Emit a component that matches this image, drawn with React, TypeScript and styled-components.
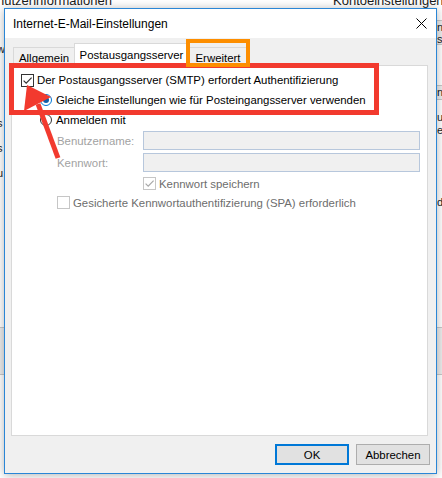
import React from "react";
import styled, { createGlobalStyle } from "styled-components";

const GlobalStyle = createGlobalStyle`
  html, body { margin: 0; padding: 0; background: #ffffff; }
  body { font-family: "Liberation Sans", Arial, sans-serif; }
  * { box-sizing: border-box; }
`;

const FONT = `"Liberation Sans", Arial, sans-serif`;

const Screen = styled.div`
  position: relative;
  width: 442px;
  height: 478px;
  overflow: hidden;
  background: #ffffff;
  font-family: ${FONT};
  padding: 8px 0 0 4px;
`;

/* ---------- window behind the dialog ---------- */
const BackText = styled.span<{ $x: number; $y: number; $size?: number }>`
  position: absolute;
  left: ${(p) => p.$x}px;
  top: ${(p) => p.$y}px;
  font-size: ${(p) => p.$size ?? 11}px;
  line-height: 1;
  color: #1b1b1b;
  white-space: nowrap;
`;

const BackBand = styled.div<{ $x: number; $y: number; $w: number; $h: number }>`
  position: absolute;
  left: ${(p) => p.$x}px;
  top: ${(p) => p.$y}px;
  width: ${(p) => p.$w}px;
  height: ${(p) => p.$h}px;
  background: #ececec;
  border-top: 1px solid #c8c8c8;
  border-bottom: 1px solid #c8c8c8;
`;

/* ---------- dialog ---------- */
const Dialog = styled.div`
  position: relative;
  z-index: 1;
  width: 433px;
  height: 466px;
  border: 1px solid #2a86d6;
  background: #f0f0f0;
  display: flex;
  flex-direction: column;
  box-shadow: 0 1px 9px rgba(0, 0, 0, 0.3);
`;

const TitleBar = styled.div`
  height: 29px;
  flex: none;
  background: #ffffff;
  display: flex;
  align-items: center;
  justify-content: space-between;
  padding: 0 9px 0 8px;
`;

const Title = styled.span`
  font-size: 12px;
  color: #000000;
`;

const Body = styled.div`
  flex: 1;
  display: flex;
  flex-direction: column;
  padding: 5px 0 0 6px;
`;

const TabRow = styled.div`
  display: flex;
  align-items: flex-end;
  height: 22px;
  padding-left: 2px;
  position: relative;
  z-index: 1;
`;

const Tab = styled.div<{ $active?: boolean; $w: number }>`
  width: ${(p) => p.$w}px;
  height: ${(p) => (p.$active ? 23 : 18)}px;
  margin-bottom: ${(p) => (p.$active ? -1 : 0)}px;
  margin-left: -1px;
  background: ${(p) => (p.$active ? "#ffffff" : "#f0f0f0")};
  border: 1px solid #d9d9d9;
  border-bottom: none;
  display: flex;
  align-items: center;
  justify-content: center;
  padding-top: ${(p) => (p.$active ? 0 : 2)}px;
  font-size: 11.4px;
  color: #000000;
  &:first-child { margin-left: 0; }
`;

const Panel = styled.div`
  width: 417px;
  height: 371px;
  flex: none;
  background: #ffffff;
  border: 1px solid #d9d9d9;
  display: flex;
  flex-direction: column;
  padding-top: 4px;
`;

const Row = styled.div<{ $indent: number; $h: number; $mt?: number; $gap?: number }>`
  display: flex;
  align-items: center;
  height: ${(p) => p.$h}px;
  margin-top: ${(p) => p.$mt ?? 0}px;
  padding-left: ${(p) => p.$indent}px;
  gap: ${(p) => p.$gap ?? 3}px;
  font-size: 11.4px;
  white-space: nowrap;
`;

type Tone = "normal" | "muted" | "faint";
const Label = styled.span<{ $tone?: Tone; $w?: number }>`
  color: ${(p) =>
    p.$tone === "faint" ? "#a2a2a2" : p.$tone === "muted" ? "#6d6d6d" : "#000000"};
  ${(p) => (p.$w ? `width: ${p.$w}px; flex: none;` : "")}
`;

const TextBox = styled.div`
  width: 277px;
  height: 19px;
  flex: none;
  background: #f0f0f0;
  border: 1px solid #b7c7dc;
`;

type BoxState = "checked" | "disabledChecked" | "disabled";
const Box = styled.span<{ $state: BoxState }>`
  width: 13px;
  height: 13px;
  flex: none;
  display: inline-flex;
  align-items: center;
  justify-content: center;
  background: #ffffff;
  border: 1px solid ${(p) => (p.$state === "checked" ? "#333333" : "#c6c6c6")};
  svg { display: block; }
`;

const Check = ({ state }: { state: BoxState }) => (
  <Box $state={state}>
    {state !== "disabled" && (
      <svg width="11" height="11" viewBox="0 0 11 11">
        <path
          d="M1.6 5.6 L4.2 8.2 L9.6 2.6"
          fill="none"
          stroke={state === "checked" ? "#333333" : "#a8a8a8"}
          strokeWidth="1.2"
        />
      </svg>
    )}
  </Box>
);

const Radio = styled.span<{ $on?: boolean }>`
  width: 12px;
  height: 12px;
  flex: none;
  border-radius: 50%;
  background: #ffffff;
  border: 1px solid ${(p) => (p.$on ? "#0078d7" : "#333333")};
  display: inline-flex;
  align-items: center;
  justify-content: center;
  margin-right: 1px;
  &::after {
    content: "";
    width: 6px;
    height: 6px;
    border-radius: 50%;
    background: ${(p) => (p.$on ? "#0f5fa8" : "transparent")};
  }
`;

const Footer = styled.div`
  display: flex;
  justify-content: flex-end;
  gap: 7px;
  padding: 8px 6px 0 0;
`;

const Button = styled.button<{ $primary?: boolean }>`
  width: 74px;
  height: 21px;
  padding: 0;
  background: #e1e1e1;
  border: ${(p) => (p.$primary ? "2px solid #0078d7" : "1px solid #adadad")};
  font-family: ${FONT};
  font-size: 11.4px;
  color: #000000;
`;

const Overlay = styled.svg`
  position: absolute;
  left: 0;
  top: 0;
  width: 442px;
  height: 478px;
  z-index: 2;
  pointer-events: none;
`;

export default function App() {
  return (
    <>
      <GlobalStyle />
      <Screen>
        <BackText $x={-3} $y={-6} $size={13}>nutzerinformationen</BackText>
        <BackText $x={333} $y={-6} $size={13}>Kontoeinstellungen testen</BackText>
        <BackText $x={-3} $y={44}>w</BackText>
        <BackText $x={-4} $y={93}>r</BackText>
        <BackText $x={-3} $y={118}>s</BackText>
        <BackText $x={-3} $y={143}>s</BackText>
        <BackText $x={-3} $y={168}>u</BackText>
        <BackText $x={-4} $y={216}>r</BackText>
        <BackBand $x={437} $y={20} $w={6} $h={25} />
        <BackText $x={437} $y={22}>n,</BackText>
        <BackText $x={437} $y={34}>s</BackText>
        <BackBand $x={437} $y={85} $w={6} $h={15} />
        <BackText $x={437} $y={87}>n</BackText>
        <BackText $x={437} $y={112}>u</BackText>
        <BackText $x={437} $y={125}>e</BackText>
        <BackText $x={437} $y={197}>d</BackText>
        <BackBand $x={-1} $y={327} $w={6} $h={48} />
        <BackBand $x={437} $y={327} $w={6} $h={48} />

        <Dialog>
          <TitleBar>
            <Title>Internet-E-Mail-Einstellungen</Title>
            <svg width="11" height="11" viewBox="0 0 11 11">
              <path d="M0.5 0.5 L10.5 10.5 M10.5 0.5 L0.5 10.5" stroke="#000" strokeWidth="1" />
            </svg>
          </TitleBar>
          <Body>
            <TabRow>
              <Tab $w={62}>Allgemein</Tab>
              <Tab $w={115} $active>Postausgangsserver</Tab>
              <Tab $w={60}>Erweitert</Tab>
            </TabRow>
            <Panel>
              <Row $indent={9} $h={20}>
                <Check state="checked" />
                <Label>Der Postausgangsserver (SMTP) erfordert Authentifizierung</Label>
              </Row>
              <Row $indent={28} $h={20}>
                <Radio $on />
                <Label>Gleiche Einstellungen wie für Posteingangsserver verwenden</Label>
              </Row>
              <Row $indent={28} $h={20}>
                <Radio />
                <Label>Anmelden mit</Label>
              </Row>
              <Row $indent={45} $h={19} $mt={1} $gap={0}>
                <Label $tone="faint" $w={86}>Benutzername:</Label>
                <TextBox />
              </Row>
              <Row $indent={45} $h={19} $mt={3} $gap={0}>
                <Label $tone="faint" $w={86}>Kennwort:</Label>
                <TextBox />
              </Row>
              <Row $indent={131} $h={19} $mt={2}>
                <Check state="disabledChecked" />
                <Label $tone="muted">Kennwort speichern</Label>
              </Row>
              <Row $indent={45} $h={19}>
                <Check state="disabled" />
                <Label $tone="muted">Gesicherte Kennwortauthentifizierung (SPA) erforderlich</Label>
              </Row>
            </Panel>
            <Footer>
              <Button $primary>OK</Button>
              <Button>Abbrechen</Button>
            </Footer>
          </Body>
        </Dialog>

        <Overlay viewBox="0 0 442 478">
          <rect x="11.5" y="65.5" width="365" height="47" fill="none" stroke="#f23a2e" strokeWidth="5" />
          <rect x="188" y="41" width="60" height="24" fill="none" stroke="#fd8e00" strokeWidth="4" />
          <line x1="38" y1="104" x2="58" y2="158" stroke="#f23a2e" strokeWidth="5" />
          <polygon points="27,85 24,111 51,97" fill="#f23a2e" />
        </Overlay>
      </Screen>
    </>
  );
}
